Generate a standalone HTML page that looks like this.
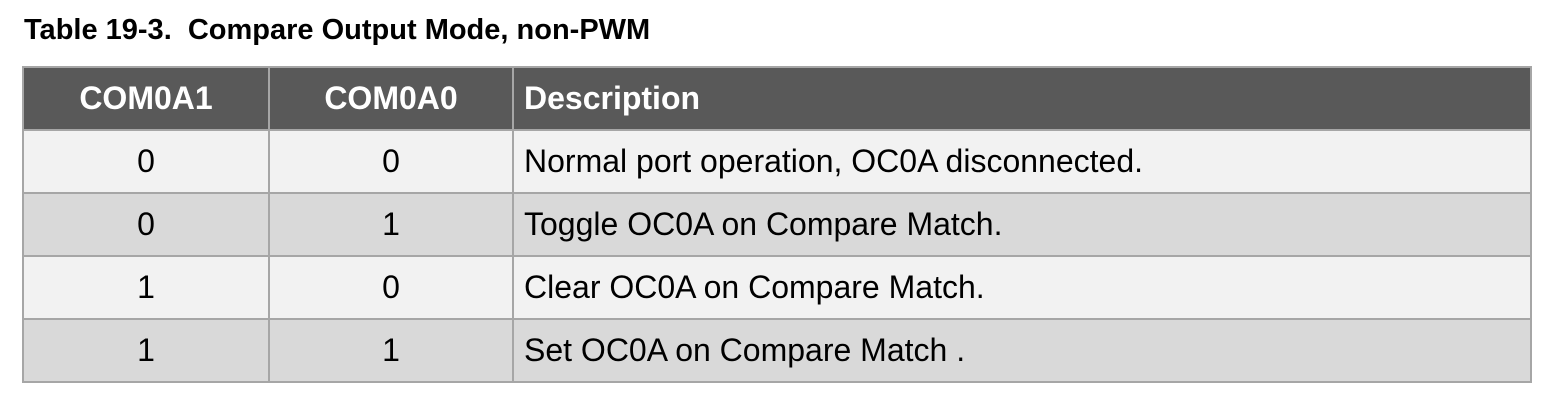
<!DOCTYPE html><html><head><style>
body{margin:0;width:1548px;height:406px;background:#fff;font-family:"Liberation Sans",Arial,sans-serif;position:relative;overflow:hidden}
.t{position:absolute;left:24px;top:14px;font-weight:bold;font-size:29px;line-height:32px;color:#000}
table{position:absolute;left:22px;top:66px;border-collapse:collapse;width:1510px}
td,th{border:2px solid #a6a6a6;height:63px;padding:0 10px;font-size:32px;color:#000;font-weight:normal;box-sizing:border-box}
th{background:#595959;color:#fff;font-weight:bold}
td.c,th.c{text-align:center}
th.l,td.l{text-align:left}
tr.a td{background:#f2f2f2}
tr.b td{background:#d9d9d9}
</style></head><body>
<div class="t">Table 19-3.&nbsp; Compare Output Mode, non-PWM</div>
<table>
<tr><th class="c" style="width:246px">COM0A1</th><th class="c" style="width:244px">COM0A0</th><th class="l">Description</th></tr>
<tr class="a"><td class="c">0</td><td class="c">0</td><td class="l">Normal port operation, OC0A disconnected.</td></tr>
<tr class="b"><td class="c">0</td><td class="c">1</td><td class="l">Toggle OC0A on Compare Match.</td></tr>
<tr class="a"><td class="c">1</td><td class="c">0</td><td class="l">Clear OC0A on Compare Match.</td></tr>
<tr class="b"><td class="c">1</td><td class="c">1</td><td class="l">Set OC0A on Compare Match .</td></tr>
</table>
</body></html>
